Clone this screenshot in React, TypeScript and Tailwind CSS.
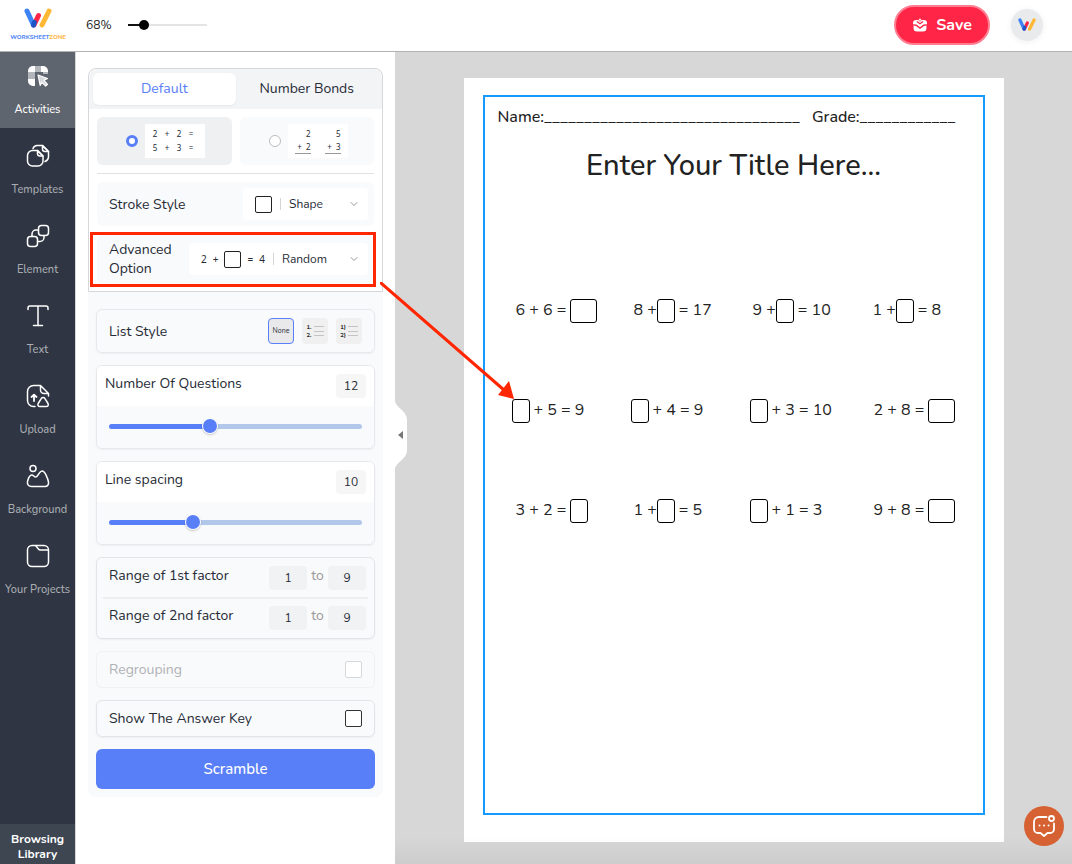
import React, { useState } from "react";
import { ChevronDown } from "lucide-react";

const strokeProps = {
  fill: "none",
  stroke: "currentColor",
  strokeWidth: 1.5,
  strokeLinecap: "round" as const,
  strokeLinejoin: "round" as const,
};

function LogoMark({ className }: { className?: string }) {
  return (
    <svg viewBox="0 0 28 20" className={className} fill="none" strokeWidth="5" strokeLinecap="round" aria-hidden="true">
      <path d="M25 3 18 17" stroke="#ffb834" />
      <path d="M14.5 7.5 10 17" stroke="#ff2547" />
      <path d="M3 3 9.5 17" stroke="#3d83f5" />
      <path d="M10.3 14.5 9.5 17" stroke="#1d55c8" />
    </svg>
  );
}

function ActivitiesIcon() {
  return (
    <svg width="24" height="24" viewBox="0 0 24 24" aria-hidden="true">
      <path d="M7 2h3v6H2V7a5 5 0 0 1 5-5Z" fill="#fff" />
      <path d="M9 2h6v6H9zM2 8h7v7H2z" fill="#b3b7bc" />
      <path d="M15 2h2a5 5 0 0 1 5 5v1h-7zM2 15h7v7H7a5 5 0 0 1-5-5z" fill="#fff" />
      <path d="M17 8h5v2h-5z" fill="#b3b7bc" />
      <path d="m12 11 9.500 3.500-3.500 1.800 3.500 4-1.800 1.700-4-3.800-1.500 3.300z" fill="#d6d8db" stroke="#fff" strokeWidth="1.200" strokeLinejoin="round" />
    </svg>
  );
}

function TemplatesIcon() {
  return (
    <svg width="24" height="24" viewBox="0 0 24 24" {...strokeProps} aria-hidden="true">
      <path d="M11.500 6.500H6.500A5 5 0 0 0 1.500 11.500v5.500a5 5 0 0 0 5 5h5.500a5 5 0 0 0 5-5v-5z" />
      <path d="M11.500 6.500V9.500a2.500 2.500 0 0 0 2.500 2.500h3z" />
      <path d="M7 4.500A4.500 4.500 0 0 1 11 1.500h5.500l6 6V13a5 5 0 0 1-3.500 4.500" />
      <path d="M16.500 1.500v3.500a2.500 2.500 0 0 0 2.500 2.500h3.500z" />
    </svg>
  );
}

function ElementIcon() {
  return (
    <svg width="24" height="24" viewBox="0 0 24 24" {...strokeProps} aria-hidden="true">
      <rect x="12.500" y="1.500" width="10" height="10" rx="3" />
      <rect x="1.500" y="12.500" width="10" height="10" rx="3" />
      <path d="M12.500 6H10a4 4 0 0 0-4 4v2.500M11.500 17.500H14a4 4 0 0 0 4-4v-2" />
    </svg>
  );
}

function TextIcon() {
  return (
    <svg width="24" height="24" viewBox="0 0 24 24" {...strokeProps} aria-hidden="true">
      <path d="M2 5.500V4a2 2 0 0 1 2-2h16a2 2 0 0 1 2 2v1.500M12 2v19.500M7.500 21.500h9" />
    </svg>
  );
}

function UploadIcon() {
  return (
    <svg width="24" height="24" viewBox="0 0 24 24" {...strokeProps} aria-hidden="true">
      <path d="M9 22.500H7.500a6 6 0 0 1-6-6v-9a6 6 0 0 1 6-6h7l8 8V12M14.500 1.500V6a3.500 3.500 0 0 0 3.500 3.500h4.500z" />
      <path d="M8 17v-6M5.500 13 8 10.700l2.500 2.300" strokeWidth="1.800" />
      <path d="m12.200 19.500 3-4.800a2.200 2.200 0 0 1 3.800 0l3 4.800c.8 1.500 0 3-1.700 3h-6.400c-1.700 0-2.500-1.500-1.700-3Z" />
    </svg>
  );
}

function BackgroundIcon() {
  return (
    <svg width="24" height="24" viewBox="0 0 24 24" {...strokeProps} aria-hidden="true">
      <circle cx="7" cy="4.500" r="3" />
      <path d="M1.500 17.500c.5-2 2-5.500 3.500-6.300 2-1 3 1.800 4.800 1.800 2.500 0 3.200-6 6.200-6 3.300 0 6 8.500 6.500 11 .4 2.700-1 4.500-3.500 4.500H5.500c-2.800 0-4.500-2-4-5Z" />
    </svg>
  );
}

function ProjectsIcon() {
  return (
    <svg width="24" height="24" viewBox="0 0 24 24" {...strokeProps} aria-hidden="true">
      <rect x="1.500" y="1.500" width="21" height="21" rx="4.500" />
      <path d="m10 2 2.200 2.700c.6.800 1.200 1.300 2.300 1.300h7.500" />
    </svg>
  );
}

const navItems = [
  { label: "Activities", icon: ActivitiesIcon },
  { label: "Templates", icon: TemplatesIcon },
  { label: "Element", icon: ElementIcon },
  { label: "Text", icon: TextIcon },
  { label: "Upload", icon: UploadIcon },
  { label: "Background", icon: BackgroundIcon },
  { label: "Your Projects", icon: ProjectsIcon },
];

const MIN_ZOOM = 40;
const MAX_ZOOM = 215;

function Header() {
  const [zoom, setZoom] = useState(68);
  const fill = ((zoom - MIN_ZOOM) / (MAX_ZOOM - MIN_ZOOM)) * 100;

  return (
    <header className="flex h-[52px] shrink-0 items-center border-b border-[#b3b3b3] bg-white pr-[29px] pb-0.5">
      <a href="#" className="flex w-[76px] flex-col items-center text-[6px] leading-[8px] font-extrabold">
        <LogoMark className="mb-[5px] h-5 w-7" />
        <span className="text-[#5a8df5]">
          WORKSHEET<span className="text-[#ffb84a]">ZONE</span>
        </span>
      </a>
      <label htmlFor="zoom" className="ml-[10px] w-[42px] text-[12px] leading-4 text-[#222]">
        {zoom}%
      </label>
      <input
        id="zoom"
        type="range"
        min={MIN_ZOOM}
        max={MAX_ZOOM}
        value={zoom}
        onChange={(e) => setZoom(Number(e.target.value))}
        className="h-[2px] w-[79px] cursor-pointer appearance-none [&::-webkit-slider-thumb]:h-[10px] [&::-webkit-slider-thumb]:w-[10px] [&::-webkit-slider-thumb]:appearance-none [&::-webkit-slider-thumb]:rounded-full [&::-webkit-slider-thumb]:bg-black"
        style={{ background: `linear-gradient(to right, #111 ${fill}%, #e4e4e4 ${fill}%)` }}
      />
      <button className="ml-auto flex h-10 w-24 items-center justify-center gap-2 rounded-full border-2 border-[#ff7d90] bg-[#ff2547] text-[16px] font-bold text-white">
        <svg width="16" height="16" viewBox="0 0 16 16" aria-hidden="true">
          <path d="M4 3h8a3 3 0 0 1 3 3v1.200l-3.500.3L8 10.200 4.500 7.500 1 7.200V6a3 3 0 0 1 3-3Z" fill="#fff" />
          <path d="M1.500 8.600 4 9l4 3 4-3 2.500-.4v2.400a3.500 3.500 0 0 1-3.500 3.500H5A3.500 3.500 0 0 1 1.500 11z" fill="#fff" />
          <path d="M5.300 4.800 8 6.800l2.700-2" fill="none" stroke="#ff2547" strokeWidth="1.300" strokeLinecap="round" />
          <circle cx="8" cy="2.600" r="1.300" fill="#fff" stroke="#ff2547" strokeWidth=".6" />
        </svg>
        Save
      </button>
      <button aria-label="Account" className="ml-[21px] flex size-8 items-center justify-center rounded-full bg-[#e9eaec] shadow-[0_1px_4px_2px_#f7f7f7]">
        <LogoMark className="h-[13px] w-[18px]" />
      </button>
    </header>
  );
}

function Sidebar() {
  return (
    <aside className="flex w-[76px] shrink-0 flex-col border-r border-[#d5d7da] bg-[#2f3542]">
      <nav className="flex flex-1 flex-col gap-1">
        {navItems.map((item, i) => {
          const Icon = item.icon;
          return (
            <button
              key={item.label}
              className={`flex h-[76px] flex-col items-center gap-[13px] pt-3 text-[11px] leading-[18px] font-medium whitespace-nowrap text-white ${
                i === 0 ? "bg-[#5f656f]" : ""
              }`}
            >
              <Icon />
              <span className={i === 0 ? "text-white" : "text-[#a9adb3]"}>{item.label}</span>
            </button>
          );
        })}
      </nav>
      <button className="bg-[#3e4652] pt-2 pb-0.5 text-[12px] leading-[15px] font-bold text-white">
        Browsing Library
      </button>
    </aside>
  );
}

interface SliderCardProps {
  id: string;
  label: string;
  initial: number;
  min: number;
  max: number;
}

function SliderCard({ id, label, initial, min, max }: SliderCardProps) {
  const [value, setValue] = useState(initial);
  const fill = ((value - min) / (max - min)) * 100;

  return (
    <section className="overflow-hidden rounded-md border border-[#e6e8eb] shadow-xs">
      <div className="flex h-10 items-start justify-between bg-white pr-2 pl-2">
        <label htmlFor={id} className="pt-2 text-[14px] leading-5">{label}</label>
        <input
          aria-label={label + " value"}
          value={value}
          onChange={(e) => setValue(Number(e.target.value) || min)}
          className="mt-2 h-6 w-[30px] rounded bg-[#f6f6f7] text-center text-[12px]"
        />
      </div>
      <div className="flex h-[42px] items-center px-3 pb-0.5">
        <input
          id={id}
          type="range"
          min={min}
          max={max}
          value={value}
          onChange={(e) => setValue(Number(e.target.value))}
          className="h-[5px] w-full cursor-pointer appearance-none rounded-full [&::-webkit-slider-thumb]:h-[14px] [&::-webkit-slider-thumb]:w-[14px] [&::-webkit-slider-thumb]:appearance-none [&::-webkit-slider-thumb]:rounded-full [&::-webkit-slider-thumb]:bg-[#587ef8] [&::-webkit-slider-thumb]:shadow-[0_0_0_1px_#fff,0_1px_2px_1px_#0003]"
          style={{ background: `linear-gradient(to right, #587ef8 ${fill}%, #b1c8eb ${fill}%)` }}
        />
      </div>
    </section>
  );
}

function RangeRow({ label, id }: { label: string; id: string }) {
  return (
    <div className="flex h-10 items-start pt-2 pr-2 pl-3">
      <label htmlFor={id} className="flex-1 text-[14px] leading-5">{label}</label>
      <input id={id} defaultValue="1" className="h-6 w-[38px] rounded bg-[#f1f2f4] text-center text-[12px]" />
      <span className="w-[21px] text-center text-[14px] leading-5 text-[#999]">to</span>
      <input aria-label={label + " maximum"} defaultValue="9" className="h-6 w-[38px] rounded bg-[#f1f2f4] text-center text-[12px]" />
    </div>
  );
}

function NumberedLines({ marks }: { marks: string[] }) {
  return (
    <span className="flex items-center gap-0.5">
      <span className="flex flex-col text-[6px] leading-[8px] font-bold text-[#222]">
        {marks.map((m) => (
          <span key={m}>{m}</span>
        ))}
      </span>
      <svg width="10" height="12" viewBox="0 0 10 12" stroke="#c4c4c4" aria-hidden="true">
        <path d="M0 1.500h10M0 6.500h10M0 10.500h10" />
      </svg>
    </span>
  );
}

function SettingsPanel() {
  return (
    <div className="w-[319px] shrink-0 bg-white pt-4 pr-3 pl-3 text-[#262b35]">
      <div className="rounded-lg bg-[#f9fafc] pb-2">
        <div className="rounded-t-lg border border-[#d5d7da] bg-white pb-[7px]">
          <div className="flex h-10 rounded-t-lg bg-[#f3f4f6] p-1 text-[14px]">
            <button className="flex-1 rounded-md bg-white pb-0.5 text-[#587ef8] shadow-xs">Default</button>
            <button className="flex-1 pb-0.5">Number Bonds</button>
          </div>

          <div className="mx-2 grid grid-cols-2 gap-2 border-b border-[#e0e1e3] py-2">
            <label className="flex h-12 items-center gap-[7px] rounded-md bg-[#eff0f2] pl-[29px]">
              <input type="radio" name="layout" defaultChecked className="size-3 appearance-none rounded-full border-[#587ef8] bg-white checked:border-3" />
              <span className="grid h-[34px] w-[60px] grid-cols-4 items-center bg-white py-[3px] pr-2 pl-1 text-center font-['Noto_Sans'] text-[8px] leading-[14px]">
                <span>2</span><span>+</span><span>2</span><span>=</span>
                <span>5</span><span>+</span><span>3</span><span>=</span>
              </span>
            </label>
            <label className="flex h-12 items-center gap-[7px] rounded-md bg-[#f9fafc] pl-[29px]">
              <input type="radio" name="layout" className="size-3 appearance-none rounded-full border border-[#bbb] bg-white" />
              <span className="flex h-[34px] w-[60px] items-center justify-between bg-white px-[7px] pb-0.5 text-right font-['Noto_Sans'] text-[8px] leading-[13px]">
                <span className="flex flex-col"><span>2</span><span className="w-4 border-b border-[#999]">+&nbsp; 2</span></span>
                <span className="flex flex-col"><span>5</span><span className="w-4 border-b border-[#999]">+&nbsp; 3</span></span>
              </span>
            </label>
          </div>

          <div className="mx-2 mt-2 flex h-11 items-center justify-between rounded-md bg-[#f9fafc] pr-[6px] pl-3">
            <label htmlFor="stroke" className="text-[14px]">Stroke Style</label>
            <div className="flex h-8 w-[125px] items-center rounded bg-white pr-2 pl-3">
              <span className="size-[17px] rounded-xs border border-[#222]" />
              <span className="mx-2 h-3 w-px bg-[#d5d5d5]" />
              <select id="stroke" className="min-w-0 flex-1 appearance-none text-[12px]">
                <option>Shape</option>
                <option>Line</option>
              </select>
              <ChevronDown size={12} strokeWidth={2} className="text-[#999]" />
            </div>
          </div>

          <div className="relative mx-2 mt-2 flex h-[50px] items-center justify-between rounded-md bg-[#f9fafc] pr-[6px] pl-3">
            <label htmlFor="advanced" className="w-[72px] text-[14px] leading-[19px]">Advanced Option</label>
            <div className="flex h-8 w-[179px] items-center rounded bg-white pr-2 pl-3">
              <span className="flex items-center gap-[6px] font-['Noto_Sans'] text-[10px]">
                <span>2</span><span>+</span>
                <span className="size-[17px] rounded-xs border border-[#222]" />
                <span>=</span><span>4</span>
              </span>
              <span className="mx-2 h-3 w-px bg-[#d5d5d5]" />
              <select id="advanced" className="min-w-0 flex-1 appearance-none text-[12px]">
                <option>Random</option>
                <option>Fixed</option>
              </select>
              <ChevronDown size={12} strokeWidth={2} className="text-[#999]" />
            </div>
            <span className="pointer-events-none absolute -top-[2px] -right-[2px] -bottom-[3px] -left-[7px] border-3 border-[#ff2600]" />
          </div>
        </div>

        <div className="mt-[17px] flex flex-col gap-3 px-2">
          <section className="flex h-11 items-center rounded-md border border-[#e6e8eb] pr-3 pl-3 shadow-xs">
            <span className="flex-1 text-[14px]">List Style</span>
            <div className="flex gap-2">
              <button className="h-[26px] w-[26px] rounded border border-[#587ef8] bg-[#e9e9eb] text-[7px]">None</button>
              <button aria-label="Dot numbers" className="flex h-[26px] w-[26px] items-center justify-center rounded bg-[#f0f0f1]">
                <NumberedLines marks={["1.", "2."]} />
              </button>
              <button aria-label="Bracket numbers" className="flex h-[26px] w-[26px] items-center justify-center rounded bg-[#f0f0f1]">
                <NumberedLines marks={["1)", "2)"]} />
              </button>
            </div>
          </section>

          <SliderCard id="questions" label="Number Of Questions" initial={12} min={1} max={29} />
          <SliderCard id="spacing" label="Line spacing" initial={10} min={1} max={29} />

          <section className="rounded-md border border-[#e2e4e7] shadow-xs">
            <RangeRow id="factor1" label="Range of 1st factor" />
            <div className="mx-[6px] -my-px border-t-2 border-[#eceef0]" />
            <RangeRow id="factor2" label="Range of 2nd factor" />
          </section>

          <label className="flex h-[37px] items-center justify-between rounded-md border border-[#f0f1f3] px-3 text-[14px] text-[#b0b2b5]">
            Regrouping
            <input type="checkbox" disabled className="size-[17px] appearance-none rounded-xs border border-[#d6d8da] bg-white" />
          </label>
          <label className="flex h-[37px] items-center justify-between rounded-md border border-[#e2e4e7] px-3 text-[14px] shadow-xs">
            Show The Answer Key
            <input type="checkbox" className="size-[17px] appearance-none rounded-xs border border-[#333] bg-white" />
          </label>
          <button className="h-10 rounded-md bg-[#587ef8] text-[15px] font-medium text-white">Scramble</button>
        </div>
      </div>
    </div>
  );
}

// "_" is a narrow answer box, "__" a wide one
const questions = [
  ["6 + 6 =", "__", ""],
  ["8 +", "_", "= 17"],
  ["9 +", "_", "= 10"],
  ["1 +", "_", "= 8"],
  ["", "_", "+ 5 = 9"],
  ["", "_", "+ 4 = 9"],
  ["", "_", "+ 3 = 10"],
  ["2 + 8 =", "__", ""],
  ["3 + 2 =", "_", ""],
  ["1 +", "_", "= 5"],
  ["", "_", "+ 1 = 3"],
  ["9 + 8 =", "__", ""],
];

function Worksheet() {
  return (
    <div className="h-[764px] w-[540px] shrink-0 bg-white px-[19px] pt-[17px] text-[#222]">
      <div className="h-[720px] border-2 border-[#159bff]">
        <div className="flex gap-3 pt-2 pl-[13px] text-[16px] leading-6 font-medium whitespace-nowrap">
          <span>Name:{"_".repeat(32)}</span>
          <span>Grade:{"_".repeat(12)}</span>
        </div>
        <h1 className="mt-[17px] text-center text-[29px] leading-10 font-medium">Enter Your Title Here...</h1>
        <div className="mt-[113px] grid grid-cols-[119px_119px_120px_1fr] gap-y-[76px] pl-[27px] text-[16px] leading-[22px] whitespace-nowrap">
          {questions.map(([before, box, after], i) => (
            <div key={i} className="flex items-start">
              {before && <span className={after ? "pl-[3px]" : "pr-1 pl-1"}>{before}</span>}
              <span className={`h-6 rounded-[3px] border border-black ${box === "__" ? "w-[27px]" : "w-[18px]"}`} />
              {after && <span className="pl-1">{after}</span>}
            </div>
          ))}
        </div>
      </div>
    </div>
  );
}

export default function App() {
  return (
    <div className="relative flex h-screen flex-col overflow-hidden font-['Nunito','Lato',sans-serif]">
      <Header />
      <div className="flex min-h-0 flex-1">
        <Sidebar />
        <SettingsPanel />
        <main className="relative flex flex-1 justify-center bg-[#d7d7d7] pt-[26px]">
          <button aria-label="Collapse panel" className="absolute top-[348px] left-0">
            <svg width="13" height="70" viewBox="0 0 13 70" aria-hidden="true">
              <path d="M0 0c0 8 12 10 12 20v30c0 10-12 12-12 20z" fill="#fff" />
              <path d="M8 31v8l-5-4z" fill="#777" />
            </svg>
          </button>
          <Worksheet />
          <div className="pointer-events-none absolute inset-x-0 bottom-0 h-7 bg-linear-to-b from-transparent to-black/5" />
          <button aria-label="Chat" className="absolute right-2 bottom-[18px] flex size-10 items-center justify-center rounded-full bg-[#d66234] text-white">
            <svg width="24" height="24" viewBox="0 0 24 24" {...strokeProps} strokeWidth={1.800} aria-hidden="true">
              <path d="M14.500 3H7a5 5 0 0 0-5 5v7a4 4 0 0 0 4 4h2.500L12 22l3.500-3H18a4 4 0 0 0 4-4V9.500" />
              <circle cx="19.500" cy="4.500" r="2.500" />
              <path d="M7.500 11.500h.1M12 11.500h.1M16.500 11.500h.1" />
            </svg>
          </button>
        </main>
      </div>
      <svg className="pointer-events-none absolute top-[282px] left-[380px]" width="136" height="120" viewBox="0 0 136 120" aria-hidden="true">
        <path d="M1 1 124 108" stroke="#ff2600" strokeWidth="3" strokeLinecap="round" />
        <path d="m134 117-16-4 11-14z" fill="#ff2600" />
      </svg>
    </div>
  );
}
